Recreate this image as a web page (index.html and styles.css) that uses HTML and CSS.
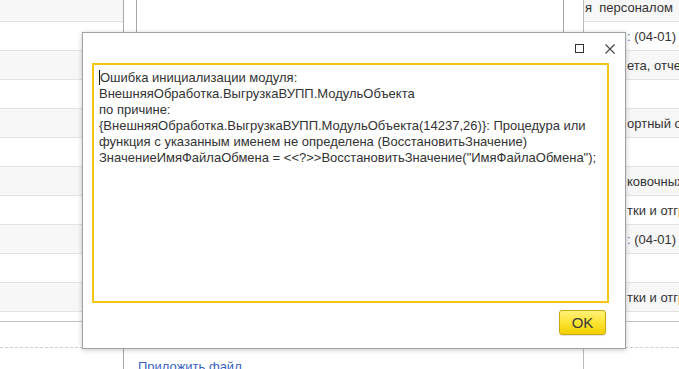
FILE: index.html
```html
<!DOCTYPE html>
<html lang="ru">
<head>
<meta charset="utf-8">
<title>Ошибка</title>
<link rel="stylesheet" href="styles.css">
</head>
<body>
<div class="page">
  <div class="col col-left">
    <div class="grid">
      <div class="row first"></div>
      <div class="row"></div>
      <div class="row"></div>
      <div class="row"></div>
      <div class="row"></div>
      <div class="row"></div>
      <div class="row"></div>
      <div class="row"></div>
      <div class="row"></div>
      <div class="row"></div>
      <div class="row"></div>
      <div class="row last"></div>
    </div>
    <div class="footer"></div>
  </div>
  <div class="col col-center">
    <div class="grid grid-center"><div class="frame"></div></div>
    <div class="footer"><span class="attach">Приложить файл</span></div>
  </div>
  <div class="col col-right">
    <div class="grid">
      <div class="row first"><span class="cell top">я  персоналом</span></div>
      <div class="row"><span class="cell"><span class="blue">:</span> (04-01)</span></div>
      <div class="row"><span class="cell">ета, отчет</span></div>
      <div class="row"></div>
      <div class="row"><span class="cell">ортный отчет</span></div>
      <div class="row"></div>
      <div class="row"><span class="cell">ковочных</span></div>
      <div class="row"><span class="cell">тки и отгрузки</span></div>
      <div class="row"><span class="cell"><span class="blue">:</span> (04-01)</span></div>
      <div class="row"></div>
      <div class="row"><span class="cell">тки и отгрузки</span></div>
      <div class="row last"></div>
    </div>
    <div class="footer"></div>
  </div>

  <div class="dialog">
    <div class="dlg-head">
      <svg class="ico ico-max" width="9" height="9" viewBox="0 0 9 9"><rect x="0.5" y="0.5" width="8" height="8" fill="none" stroke="#333" stroke-width="1"/></svg>
      <svg class="ico ico-close" width="10" height="10" viewBox="0 0 10 10"><path d="M0.5 0.5 L9.5 9.5 M9.5 0.5 L0.5 9.5" stroke="#444" stroke-width="1.1" fill="none"/></svg>
    </div>
    <div class="dlg-body">
      <div class="msg">
        <div class="line"><span class="caret"></span>Ошибка инициализации модуля:</div>
        <div class="line">ВнешняяОбработка.ВыгрузкаВУПП.МодульОбъекта</div>
        <div class="line">по причине:</div>
        <div class="line">{ВнешняяОбработка.ВыгрузкаВУПП.МодульОбъекта(14237,26)}: Процедура или</div>
        <div class="line">функция с указанным именем не определена (ВосстановитьЗначение)</div>
        <div class="line">ЗначениеИмяФайлаОбмена = &lt;&lt;?&gt;&gt;ВосстановитьЗначение("ИмяФайлаОбмена");</div>
      </div>
    </div>
    <div class="dlg-foot"><button class="ok" type="button">OK</button></div>
  </div>
</div>
</body>
</html>
```
FILE: styles.css
```css
* { box-sizing: border-box; }
html, body { margin: 0; padding: 0; }
body {
  width: 679px;
  height: 369px;
  overflow: hidden;
  background: #fff;
  font-family: "Liberation Sans", Arial, sans-serif;
  font-size: 13px;
  color: #333;
}
.page {
  position: relative;
  display: flex;
  width: 679px;
  height: 369px;
  overflow: hidden;
}
.col {
  display: flex;
  flex-direction: column;
  height: 369px;
}
.col-left {
  width: 124px;
  border-right: 1px solid #a9a9a9;
  flex: none;
}
.col-center {
  width: 459px;
  flex: none;
}
.col-right {
  flex: 1;
  min-width: 0;
  border-left: 1px solid #b9b9b9;
  overflow: hidden;
}
.grid {
  height: 322px;
  border-bottom: 1px solid #c4c4c4;
  overflow: hidden;
  flex: none;
}
.grid-center {
  border-bottom: none;
  padding-left: 12px;
  padding-right: 19px;
}
.frame {
  height: 100%;
  border-left: 1px solid #a6a6a6;
  border-right: 1px solid #a6a6a6;
}
.row {
  height: 29px;
  border-bottom: 1px solid #e2e2e2;
  white-space: pre;
  overflow: hidden;
}
.row:nth-child(odd) { background: #f7f7f7; }
.row.first { height: 22px; }
.row.last { height: 9px; border-bottom: none; }
.cell {
  display: block;
  padding-left: 43px;
  line-height: 28px;
  padding-top: 1px;
  color: #333;
}
.cell.top {
  padding-left: 1px;
  padding-top: 1px;
  line-height: 14px;
}
.blue { color: #4a78c8; }
.footer {
  flex: 1;
  margin-top: 25px;
  border-top: 1px dashed #cfcfcf;
  padding-top: 11px;
  padding-left: 14px;
}
.attach {
  color: #3b5fc0;
  line-height: 15px;
  text-decoration: underline;
}

/* dialog */
.dialog {
  position: absolute;
  left: 82px;
  top: 32px;
  width: 544px;
  height: 317px;
  background: #fff;
  border: 1px solid #a2a2a2;
  box-shadow: 0 1px 5px rgba(0, 0, 0, 0.22);
  display: flex;
  flex-direction: column;
}
.dlg-head {
  height: 30px;
  display: flex;
  justify-content: flex-end;
  align-items: flex-start;
  gap: 21px;
  padding-top: 11px;
  padding-right: 10px;
}
.ico { display: block; }
.dlg-body {
  padding-left: 9px;
}
.msg {
  width: 517px;
  height: 240px;
  border: 2px solid #f5c60f;
  padding: 5px 5px;
  line-height: 16px;
  color: #333;
}
.line { white-space: pre; }
.caret {
  display: inline-block;
  width: 1px;
  height: 15px;
  background: #111;
  vertical-align: -3px;
  margin-right: 0;
}
.dlg-foot {
  display: flex;
  justify-content: flex-end;
  padding-top: 7px;
  padding-right: 19px;
}
.ok {
  width: 47px;
  height: 25px;
  margin: 0;
  padding: 0;
  border: 1px solid #c9aa12;
  border-radius: 3px;
  background: linear-gradient(#fff27a 0%, #fde53a 45%, #f3d000 100%);
  box-shadow: 0 1px 1px rgba(0, 0, 0, 0.12);
  font-family: "Liberation Sans", Arial, sans-serif;
  font-size: 15px;
  color: #3a3a3a;
  line-height: 23px;
}
```
